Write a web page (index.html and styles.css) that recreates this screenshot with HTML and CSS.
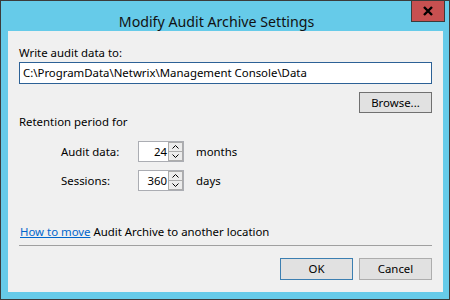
FILE: index.html
```html
<!DOCTYPE html>
<html lang="en">
<head>
  <meta charset="UTF-8" />
  <title>Modify Audit Archive Settings</title>
  <link rel="stylesheet" href="styles.css">
</head>
<body>
  <div class="window">
    <div class="titlebar">
      <div class="title">Modify Audit Archive Settings</div>
      <div class="close">
        <svg width="12" height="10" viewBox="0 0 12 10">
          <path d="M2 1 L10 9 M10 1 L2 9" stroke="#000" stroke-width="2.4" />
        </svg>
      </div>
    </div>

    <div class="client">
      <div class="label">Write audit data to:</div>
      <div class="textbox">C:\ProgramData\Netwrix\Management Console\Data</div>
      <div class="browse-row">
        <div class="button browse">Browse...</div>
      </div>

      <div class="label retention">Retention period for</div>

      <div class="spin-row">
        <div class="spin-label">Audit data:</div>
        <div class="spin">
          <div class="spin-value">24</div>
          <div class="spin-btns">
            <div class="spin-btn">
              <svg width="7" height="4" viewBox="0 0 7 4"><path d="M0.5 3.5 L3.5 0.5 L6.5 3.5" fill="none" stroke="#000" stroke-width="1" /></svg>
            </div>
            <div class="spin-btn">
              <svg width="7" height="4" viewBox="0 0 7 4"><path d="M0.5 0.5 L3.5 3.5 L6.5 0.5" fill="none" stroke="#000" stroke-width="1" /></svg>
            </div>
          </div>
        </div>
        <div class="unit">months</div>
      </div>

      <div class="spin-row">
        <div class="spin-label">Sessions:</div>
        <div class="spin">
          <div class="spin-value">360</div>
          <div class="spin-btns">
            <div class="spin-btn">
              <svg width="7" height="4" viewBox="0 0 7 4"><path d="M0.5 3.5 L3.5 0.5 L6.5 3.5" fill="none" stroke="#000" stroke-width="1" /></svg>
            </div>
            <div class="spin-btn">
              <svg width="7" height="4" viewBox="0 0 7 4"><path d="M0.5 0.5 L3.5 3.5 L6.5 0.5" fill="none" stroke="#000" stroke-width="1" /></svg>
            </div>
          </div>
        </div>
        <div class="unit">days</div>
      </div>

      <div class="link-line"><a href="#">How to move</a> Audit Archive to another location</div>
      <div class="separator"></div>

      <div class="footer">
        <div class="button ok">OK</div>
        <div class="button">Cancel</div>
      </div>
    </div>
  </div>
</body>
</html>
```

FILE: styles.css
```css
body {
  margin: 0;
  font-family: "Segoe UI", "Noto Sans", "Liberation Sans", sans-serif;
  font-size: 11.4px;
  color: #000;
}

.window {
  width: 450px;
  height: 300px;
  box-sizing: border-box;
  border: 1px solid #3b3b3b;
  background: #66cbe9;
  display: flex;
  flex-direction: column;
  padding: 0 6px 7px 7px;
}

.titlebar {
  height: 30px;
  display: flex;
  align-items: flex-start;
}

.title {
  flex: 1;
  text-align: center;
  font-size: 14.2px;
  line-height: 15px;
  padding: 13px 0 0 14px;
  color: #111;
}

.close {
  width: 32px;
  height: 20px;
  margin-top: -1px;
  margin-right: -2px;
  border: 1px solid #3b3b3b;
  background: #c75050;
  display: flex;
  align-items: center;
  justify-content: center;
}

.client {
  flex: 1;
  background: #f0f0f0;
  padding: 14px 11px 0 11px;
  display: flex;
  flex-direction: column;
}

.label {
  line-height: 15px;
}

.textbox {
  margin-top: 2px;
  height: 20px;
  line-height: 20px;
  border: 1px solid #2c6196;
  background: #fff;
  padding-left: 3px;
}

.browse-row {
  display: flex;
  justify-content: flex-end;
  margin-top: 8px;
}

.button {
  width: 71px;
  height: 19px;
  line-height: 19px;
  text-align: center;
  border: 1px solid #adadad;
  background: #e1e1e1;
}

.browse {
  border-color: #707070;
}

.retention {
  margin-top: 1px;
}

.spin-row {
  display: flex;
  align-items: center;
  margin-top: 12px;
  height: 21px;
}

.spin-row + .spin-row {
  margin-top: 8px;
}

.spin-label {
  width: 77px;
  padding-left: 42px;
}

.spin {
  width: 44px;
  height: 19px;
  border: 1px solid #abadb3;
  background: #fff;
  display: flex;
}

.spin-value {
  flex: 1;
  text-align: right;
  line-height: 19px;
  padding-right: 1px;
}

.spin-btns {
  width: 15px;
  display: flex;
  flex-direction: column;
}

.spin-btn {
  flex: 1;
  background: #ececec;
  border: 1px solid #acacac;
  display: flex;
  align-items: center;
  justify-content: center;
}

.spin-btn + .spin-btn {
  border-top: none;
}

.unit {
  margin-left: 12px;
}

.link-line {
  margin-top: 33px;
  line-height: 15px;
  padding-left: 1px;
}

.link-line a {
  color: #0066cc;
}

.separator {
  margin-top: 6px;
  height: 1px;
  background: #a0a0a0;
}

.footer {
  display: flex;
  justify-content: flex-end;
  gap: 6px;
  margin-top: 12px;
}

.footer .button {
  height: 20px;
}

.ok {
  border-color: #3c7fb1;
}
```
